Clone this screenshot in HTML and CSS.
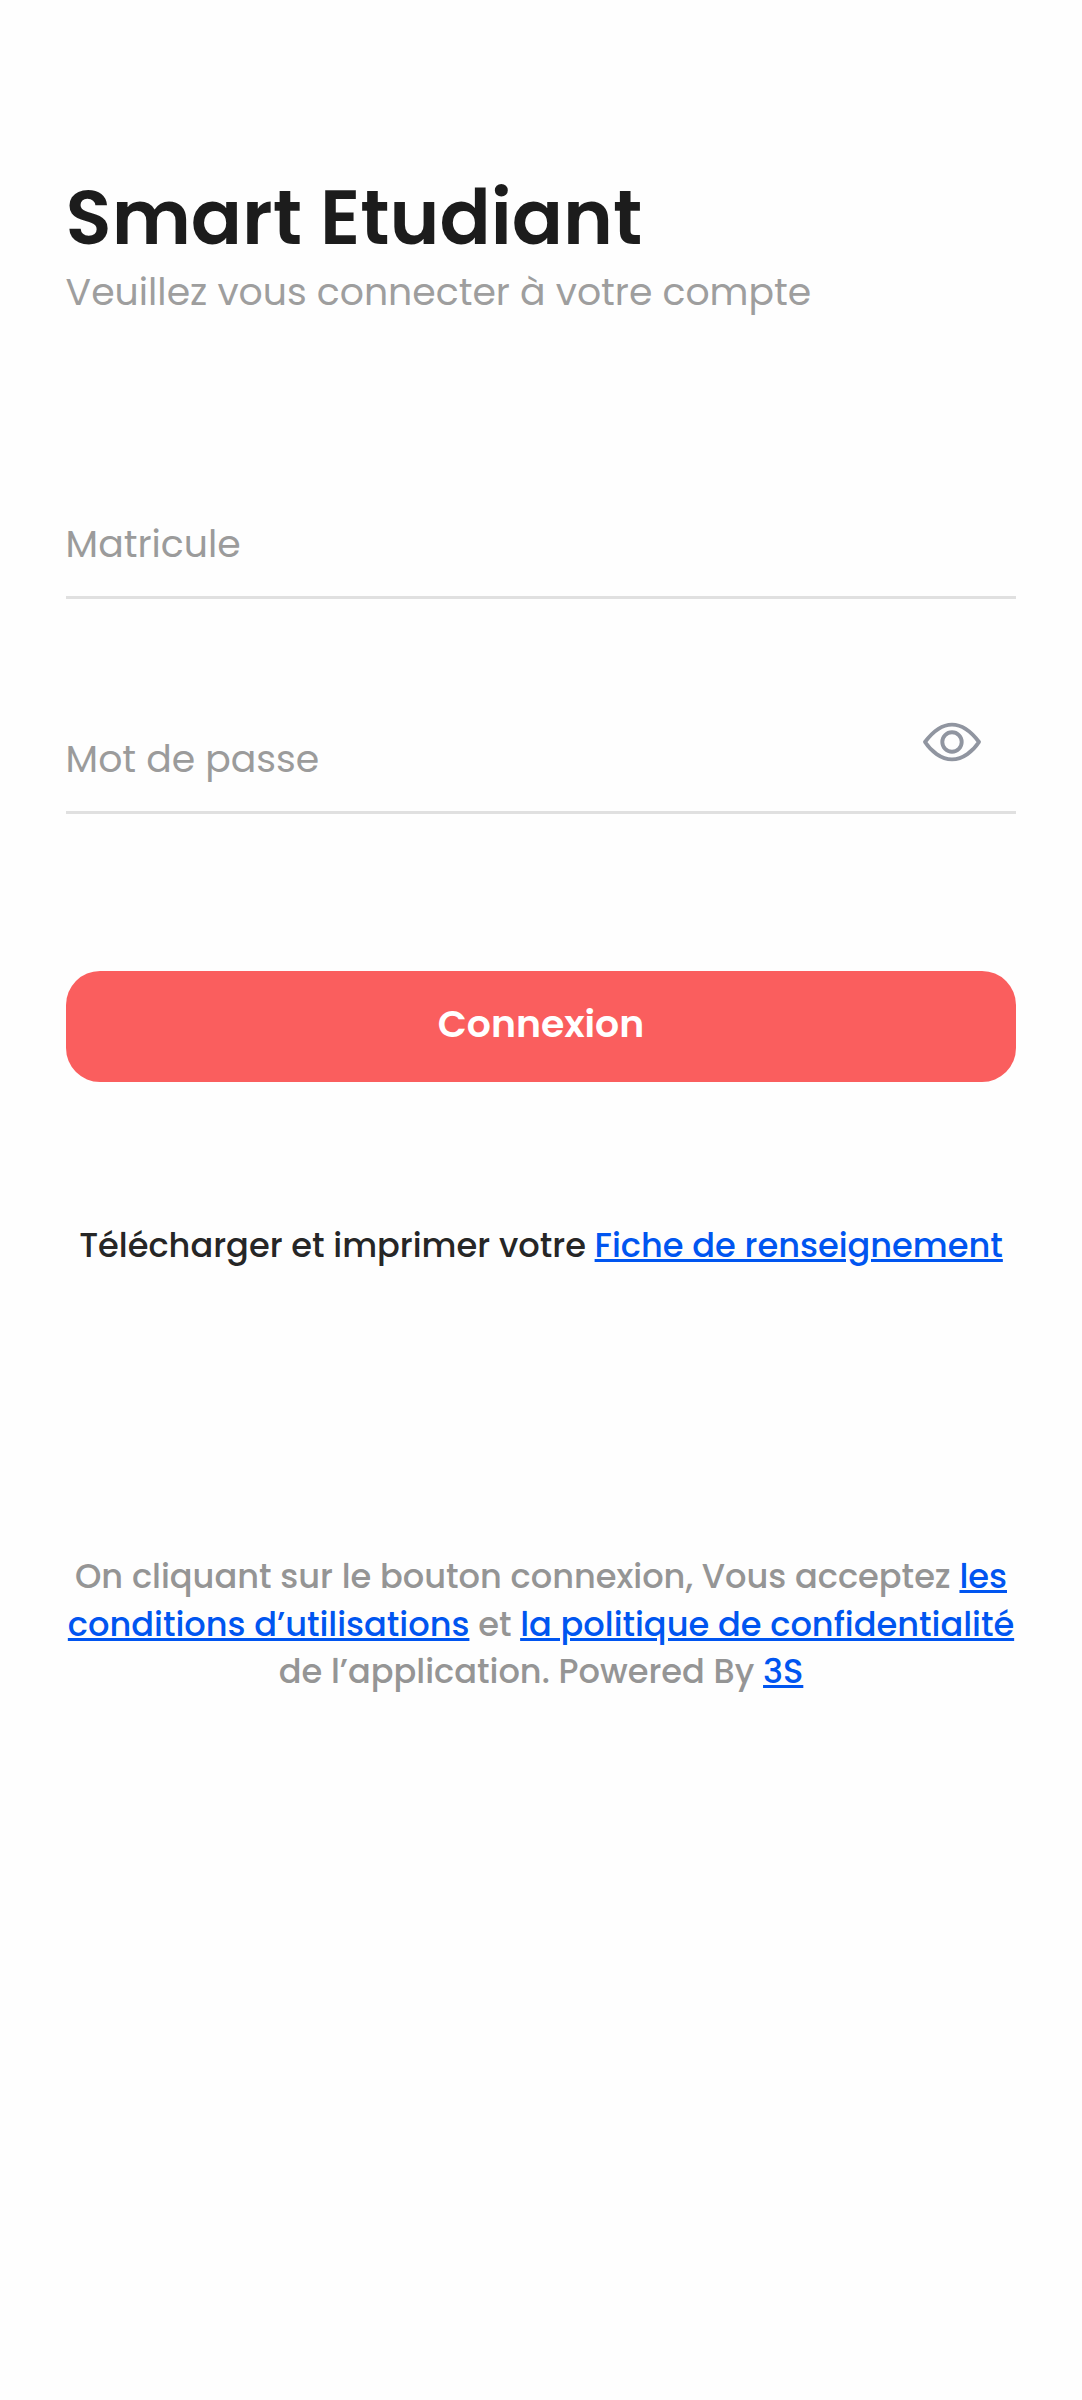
FILE: index.html
```html
<!DOCTYPE html>
<html lang="fr">
<head>
<meta charset="utf-8">
<title>Smart Etudiant</title>
<link rel="stylesheet" href="styles.css">
</head>
<body>
<main class="login">
  <header class="intro">
    <h1 class="title">Smart Etudiant</h1>
    <p class="subtitle">Veuillez vous connecter à votre compte</p>
  </header>
  <form class="form">
    <div class="field">
      <input class="input" type="text" placeholder="Matricule" aria-label="Matricule">
    </div>
    <div class="field">
      <input class="input" type="password" placeholder="Mot de passe" aria-label="Mot de passe">
      <svg class="eye" viewBox="0 0 64 44" fill="none" stroke="#9095a0" stroke-width="3.9" stroke-linejoin="round">
        <path d="M5 22C11 14 20 4.6 32 4.6S53 14 59 22C53 31 43 39.4 32 39.4S11 31 5 22Z"/>
        <circle cx="32" cy="22" r="9.7"/>
      </svg>
    </div>
    <button class="submit" type="button">Connexion</button>
  </form>
  <p class="download">Télécharger et imprimer votre <a class="link" href="#">Fiche de renseignement</a></p>
  <p class="legal">On cliquant sur le bouton connexion, Vous acceptez <a class="link" href="#">les<br>conditions d’utilisations</a> et <a class="link" href="#">la politique de confidentialité</a><br>de l’application. Powered By <a class="link" href="#">3S</a></p>
</main>
</body>
</html>
```
FILE: styles.css
```css
* {
  box-sizing: border-box;
  margin: 0;
}

body {
  background: #fefefe;
  font-family: Poppins, Inter, sans-serif;
}

.login {
  display: flex;
  flex-direction: column;
  min-height: 2400px;
  padding: 177.5px 65.6px 0;
}

.title {
  color: #1c1c1c;
  font-size: 75.6px;
  font-weight: 600;
  line-height: 80px;
}

.subtitle {
  margin-top: 9px;
  color: #9e9e9e;
  font-size: 37.8px;
  line-height: 50px;
}

.form {
  display: flex;
  flex-direction: column;
  margin-top: 202.5px;
}

.field {
  display: flex;
  align-items: flex-start;
  height: 80px;
  border-bottom: 3px solid #e0e0e0;
}

.field + .field {
  margin-top: 135px;
}

.input {
  flex: 1;
  min-width: 0;
  height: 50px;
  padding: 0;
  border: 0;
  outline: 0;
  background: none;
  font: 400 37.8px/50px Poppins, Inter, sans-serif;
}

.input::placeholder {
  color: #9b9b9b;
  opacity: 1;
}

.eye {
  width: 64px;
  height: 44px;
  margin: -14px 32.4px 0 0;
}

.submit {
  height: 110.5px;
  margin-top: 157px;
  padding: 0 0 5px;
  border: 0;
  border-radius: 34px;
  background: #fa5e5e;
  color: #fff;
  font: 600 37.8px/50px Poppins, Inter, sans-serif;
}

.download {
  margin-top: 140.5px;
  color: #262626;
  font-size: 33.62px;
  font-weight: 500;
  line-height: 48px;
  text-align: center;
  white-space: nowrap;
}

.legal {
  margin-top: 283.3px;
  color: #959595;
  font-size: 33.62px;
  font-weight: 500;
  line-height: 47.3px;
  text-align: center;
  white-space: nowrap;
}

.link {
  color: #0055f0;
  text-decoration: underline;
}
```
